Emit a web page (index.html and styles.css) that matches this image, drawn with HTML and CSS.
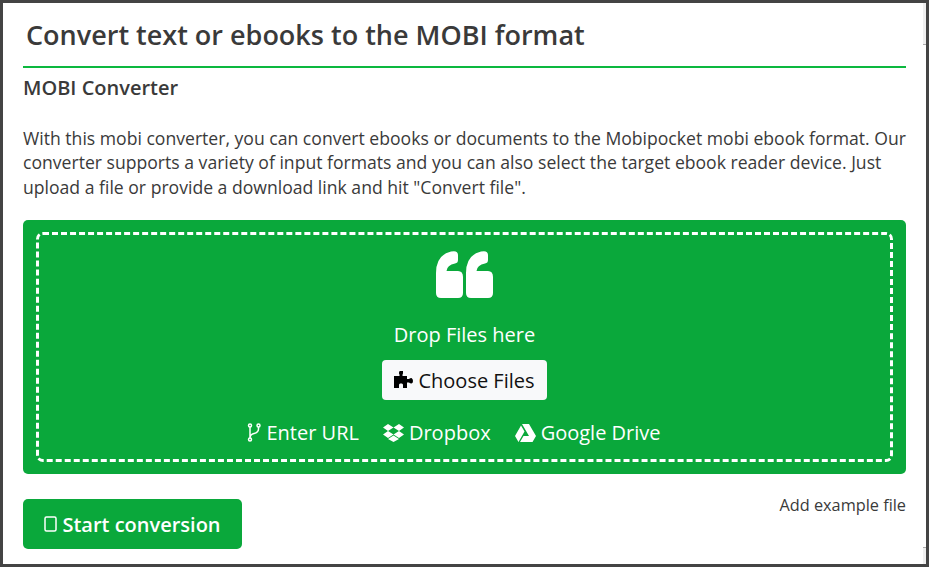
FILE: index.html
```html
<!DOCTYPE html>
<html lang="en">
<head>
<meta charset="utf-8">
<title>MOBI Converter</title>
<link rel="stylesheet" href="styles.css">
</head>
<body>
<main class="frame">
  <span class="edge edge-top"></span>
  <span class="edge edge-bottom"></span>
  <h1 class="title">Convert text or ebooks to the MOBI format</h1>
  <h2 class="subtitle">MOBI Converter</h2>
  <p class="intro">With this mobi converter, you can convert ebooks or documents to the Mobipocket mobi ebook format. Our converter supports a variety of input formats and you can also select the target ebook reader device. Just upload a file or provide a download link and hit "Convert file".</p>
  <section class="drop">
    <div class="drop-inner">
      <svg class="quote" viewBox="0 0 57 47" aria-hidden="true"><path fill="#fff" d="M5 47Q0 47 0 42V22Q0 4 15 0.500Q22 -1 22 4V9Q22 12 19 12.500Q11 14 10.500 20H22Q27 20 27 26V42Q27 47 22 47ZM35 47Q30 47 30 42V22Q30 4 45 0.500Q52 -1 52 4V9Q52 12 49 12.500Q41 14 40.500 20H52Q57 20 57 26V42Q57 47 52 47Z"/></svg>
      <div class="drop-text">Drop Files here</div>
      <button class="choose" type="button">
        <svg class="ico-puzzle" viewBox="0 0 19 18" aria-hidden="true"><path fill="#000" d="M6 0H9V2Q9 3 8.500 3.500V5H13V8H15Q16 7 17.500 7Q19 8 19 10Q19 12 17.500 12.500Q16 12.500 15 11.500H13V17H9V15Q9.500 13 8 12.500H6Q4.500 13 5 15V17H0V5H5.500V3.500Q5 3 5 2Q5 0 6 0Z"/></svg>
        <span class="choose-label">Choose Files</span>
      </button>
      <div class="sources">
        <span class="source">
          <svg class="ico-branch" viewBox="0 0 14 19" aria-hidden="true"><g fill="none" stroke="#fff" stroke-width="1.500"><circle cx="3" cy="2.500" r="1.500"/><circle cx="3" cy="16.500" r="1.500"/><circle cx="11.500" cy="2.500" r="1.500"/><path d="M3 4V15M11.500 4V6Q11.500 9.500 7 10.500Q3 11.500 3 15"/></g></svg>
          Enter URL
        </span>
        <span class="source">
          <svg class="ico-dropbox" viewBox="0 0 21 18" aria-hidden="true"><path fill="#fff" d="M5 0L10.500 3.500L5 7L0 3.500ZM16 0L21 3.500L16 7L10.500 3.500ZM0 10.500L5 7L10.500 10.500L5 14ZM16 7L21 10.500L16 14L10.500 10.500ZM5 15L10.500 11.500L16 15L10.500 18Z"/></svg>
          Dropbox
        </span>
        <span class="source">
          <svg class="ico-drive" viewBox="0 0 21 18" aria-hidden="true"><path fill="#fff" d="M7 0H14L21 12H14ZM6 1.500L9.500 7.500L3.500 18L0 12ZM5 18L8.500 12H21L17.500 18Z"/></svg>
          Google Drive
        </span>
      </div>
    </div>
  </section>
  <div class="actions">
    <button class="start" type="button">
      <svg class="ico-tablet" viewBox="0 0 13 16" aria-hidden="true"><rect x="1" y="1" width="11" height="14" rx="1.500" fill="none" stroke="#fff" stroke-width="1.500"/></svg>
      <span class="start-label">Start conversion</span>
    </button>
    <a class="example" href="#">Add example file</a>
  </div>
</main>
</body>
</html>
```
FILE: styles.css
```css
html, body {
  margin: 0;
  height: 100%;
  background: #fff;
}
* { box-sizing: border-box; }
.frame {
  position: relative;
  width: 929px;
  height: 567px;
  border: 3px solid #444;
  padding: 0 20px;
  overflow: hidden;
  font-family: "Open Sans", sans-serif;
  color: #3a3a3a;
}
.edge {
  position: absolute;
  right: 0;
  width: 3px;
  background: #efefef;
}
.edge-top { top: 0; height: 42px; border-bottom: 1px solid #aaa; }
.edge-bottom { bottom: 0; height: 17px; border-top: 1px solid #aaa; }
.title {
  margin: 0;
  padding: 12px 0 11px 3px;
  height: 65px;
  border-bottom: 2px solid #0cb83f;
  font-size: 27px;
  line-height: 40px;
  font-weight: 600;
}
.subtitle {
  margin: 7px 0 0;
  font-size: 20px;
  line-height: 26px;
  font-weight: 600;
}
.intro {
  margin: 24.700px 0 0;
  font-size: 17.600px;
  line-height: 24.500px;
}
.drop {
  margin-top: 20.800px;
  height: 254px;
  padding: 12px 13px;
  background: #0aa83b;
  border-radius: 5px;
}
.drop-inner {
  height: 230px;
  border: 3px dashed #fff;
  border-radius: 7px;
  display: flex;
  flex-direction: column;
  align-items: center;
  color: #fff;
  font-size: 20px;
}
.quote {
  width: 57px;
  height: 47px;
  margin-top: 16px;
}
.drop-text {
  margin-top: 23px;
  line-height: 28px;
}
.choose {
  margin-top: 11px;
  height: 40px;
  width: 165px;
  display: flex;
  align-items: center;
  justify-content: center;
  gap: 5px;
  background: #f8f9fa;
  border: 0;
  border-radius: 4px;
  color: #111;
  font: inherit;
}
.choose-label { padding-top: 2px; }
.ico-puzzle { width: 19px; height: 18px; }
.sources {
  margin-top: 19px;
  margin-right: 21px;
  display: flex;
  align-items: center;
  gap: 24px;
  line-height: 28px;
}
.source {
  display: flex;
  align-items: center;
  gap: 5px;
}
.ico-branch { width: 14px; height: 19px; }
.ico-dropbox { width: 21px; height: 18px; }
.ico-drive { width: 21px; height: 18px; }
.actions {
  margin-top: 25px;
  display: flex;
  justify-content: space-between;
  align-items: flex-start;
}
.start {
  width: 219px;
  height: 50px;
  display: flex;
  align-items: center;
  justify-content: center;
  gap: 5px;
  border: 0;
  border-radius: 5px;
  background: #0aa83b;
  color: #fff;
  font-family: inherit;
  font-size: 20px;
  font-weight: 600;
}
.start-label { padding-top: 2px; }
.ico-tablet { width: 13px; height: 16px; }
.example {
  margin-top: -5px;
  font-size: 16.300px;
  line-height: 22px;
  color: #3a3a3a;
  text-decoration: none;
}
```
